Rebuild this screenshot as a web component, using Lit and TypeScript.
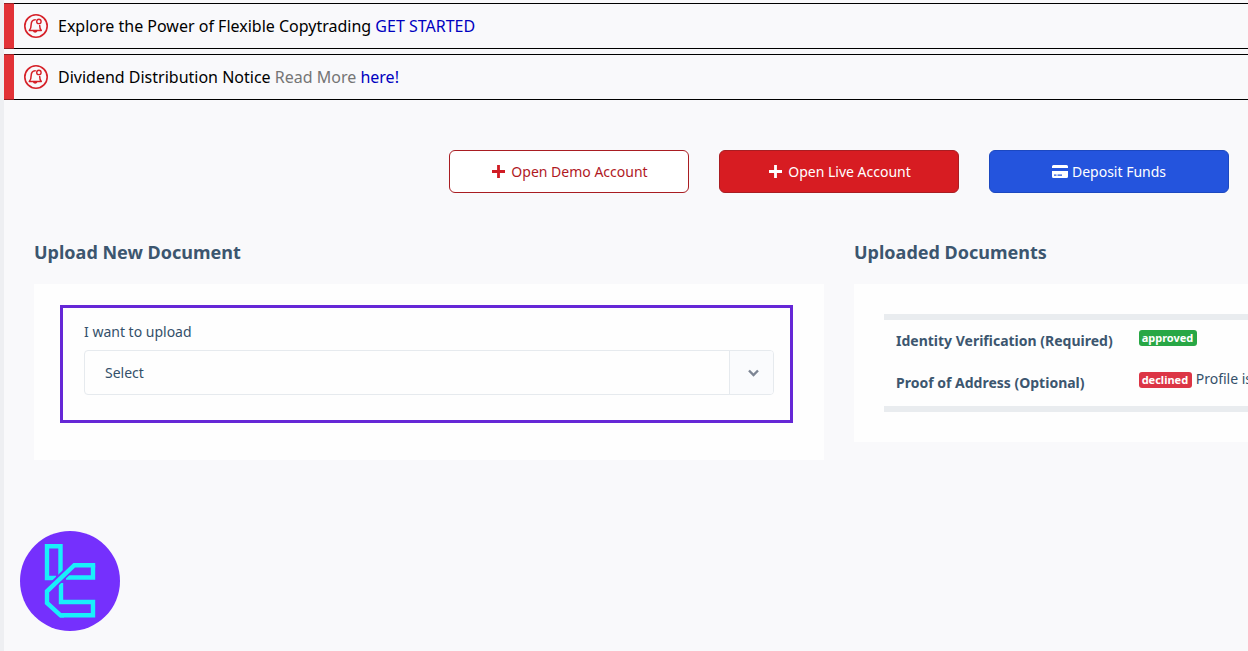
import { LitElement, html, css } from "lit";
import { customElement } from "lit/decorators.js";

const bell = html`<svg class="bell" viewBox="0 0 24 24" fill="none" stroke="#d62028" aria-hidden="true">
  <circle cx="12" cy="12" r="11.2" stroke-width="1.6" />
  <path d="M11.2 5.8C8.4 6 7.300 7.900 7.200 10.200c0 3-.2 4.400-1.900 6.300h12c-1.200-1.300-1.600-2.800-1.600-4.900" stroke-width="1.500" stroke-linecap="round" stroke-linejoin="round" />
  <path d="M9 17c.3 2.200 4 2.200 4.300 0z" fill="#d62028" stroke="none" />
  <circle cx="14.900" cy="7.400" r="2.200" stroke-width="1.400" />
</svg>`;

const plus = html`<svg class="plus" viewBox="0 0 12 12" fill="currentColor" aria-hidden="true">
  <path d="M4.700 0h2.600v4.700H12v2.600H7.300V12H4.700V7.300H0V4.700h4.700z" />
</svg>`;

const card = html`<svg class="card-icon" viewBox="0 0 16 13" fill="currentColor" aria-hidden="true">
  <path d="M1.500 0h13A1.500 1.500 0 0 1 16 1.500V3H0V1.500A1.500 1.500 0 0 1 1.500 0z" />
  <path fill-rule="evenodd" d="M0 6h16v5.500a1.500 1.500 0 0 1-1.500 1.500h-13A1.500 1.500 0 0 1 0 11.500zM2 9.500v1.200h2.500V9.500zM5.500 9.500v1.200H10V9.500z" />
</svg>`;

const documents = [
  { name: "Identity Verification (Required)", status: "approved", note: "" },
  { name: "Proof of Address (Optional)", status: "declined", note: "Profile is not verified" },
];

@customElement("app-root")
export class AppRoot extends LitElement {
  static styles = css`
    :host {
      display: block;
      box-sizing: border-box;
      min-height: 100vh;
      overflow: hidden;
      position: relative;
      padding-top: 3px;
      border-left: 4px solid #eeeff2;
      background: #f9f9fb;
      color: #34506a;
      font: 14px/20px "Noto Sans", sans-serif;
    }
    * { box-sizing: border-box; }
    a { color: #0000c0; text-decoration: none; }
    .notices { display: grid; gap: 5px; }
    .notice {
      display: flex;
      align-items: center;
      gap: 10px;
      height: 46px;
      border: solid #000;
      border-width: 1px 0;
      font-size: 16px;
      line-height: 24px;
      color: #000;
    }
    .notice::before {
      content: "";
      align-self: stretch;
      width: 10px;
      margin: -1px 0;
      border: solid #941f22;
      border-width: 1px 0;
      background: #e23237;
    }
    .notice p { margin: 0; white-space: nowrap; }
    .muted { color: #757575; }
    .bell { width: 24px; height: 24px; flex: none; }
    .actions {
      display: flex;
      justify-content: flex-end;
      gap: 30px;
      margin: 50px 19px 0 30px;
    }
    .action {
      display: flex;
      align-items: center;
      justify-content: center;
      gap: 6px;
      width: 240px;
      height: 43px;
      padding: 0 0 0 2px;
      border: 1px solid #a91d22;
      border-radius: 6px;
      font: inherit;
    }
    .demo { background: #fff; color: #b0191f; }
    .demo .plus { color: #d01c24; }
    .live { background: #d71c22; color: #fff; }
    .deposit { padding: 0; background: #2454dd; border-color: #1c48c0; color: #fff; gap: 4px; }
    .plus { width: 13px; height: 13px; }
    .card-icon { width: 16px; height: 13px; }
    .columns {
      display: grid;
      grid-template-columns: 2fr 1fr;
      gap: 30px;
      align-items: start;
      margin: 47px -1px 0 30px;
    }
    h2 { margin: 0 0 20px; font-size: 18px; line-height: 24px; font-weight: 700; color: #3c566f; }
    section { min-width: 0; }
    .card { background: #fefefe; padding: 21px 31px 37px 26px; }
    .field {
      display: grid;
      gap: 8px;
      padding: 14px 16px 25px 21px;
      border: 3px solid #6527d6;
    }
    .select-wrap { display: grid; grid-template-columns: 1fr 45px; height: 45px; }
    select {
      grid-area: 1 / 1 / 2 / 3;
      appearance: none;
      width: 100%;
      margin: 0;
      padding: 0 60px 0 20px;
      border: 1px solid #e6eaee;
      border-radius: 4px;
      background: #fefefe;
      color: inherit;
      font: inherit;
    }
    .arrow {
      grid-area: 1 / 2;
      display: grid;
      place-items: center;
      margin: 1px 1px 1px 0;
      padding-left: 4px;
      border-left: 1px solid #e6eaee;
      border-radius: 0 3px 3px 0;
      background: #fafbfd;
      pointer-events: none;
      z-index: 1;
    }
    .arrow svg { width: 11px; height: 8px; }
    .list { padding: 30px; overflow: hidden; }
    table {
      padding-bottom: 2px;
      border-collapse: separate;
      border-spacing: 0;
      border: solid #e9ecef;
      border-width: 6px 0;
      white-space: nowrap;
      text-align: left;
    }
    th, td { height: 42px; vertical-align: top; }
    th { padding: 11px 14px 11px 12px; font-weight: 700; color: #3c566f; }
    td { padding: 7px 12px; }
    .badge {
      display: inline-block;
      padding: 0 4px 0 3px;
      border-radius: 3px;
      font-size: 11px;
      line-height: 16px;
      font-weight: 700;
      color: #fff;
    }
    .approved { background: #28a745; }
    .declined { background: #dc3545; }
    .logo {
      position: absolute;
      left: 16px;
      bottom: 20px;
      width: 100px;
      height: 100px;
    }
    .handle {
      position: absolute;
      left: -4px;
      bottom: 19px;
      width: 4px;
      height: 17px;
      padding-top: 8px;
      background: #fff;
    }
    .handle::before {
      content: "";
      display: block;
      width: 1px;
      height: 1px;
      background: #888;
    }
  `;

  render() {
    return html`
      <div class="notices">
        <div class="notice">${bell}<p>Explore the Power of Flexible Copytrading <a href="#start">GET STARTED</a></p></div>
        <div class="notice">${bell}<p>Dividend Distribution Notice <span class="muted">Read More</span> <a href="#notice">here!</a></p></div>
      </div>
      <div class="actions">
        <button class="action demo" type="button">${plus}Open Demo Account</button>
        <button class="action live" type="button">${plus}Open Live Account</button>
        <button class="action deposit" type="button">${card}Deposit Funds</button>
      </div>
      <main class="columns">
        <section>
          <h2>Upload New Document</h2>
          <div class="card">
            <div class="field">
              <label for="kind">I want to upload</label>
              <div class="select-wrap">
                <select id="kind"><option>Select</option></select>
                <span class="arrow" aria-hidden="true">
                  <svg viewBox="0 0 11 8" fill="none" stroke="#7d8594" stroke-width="2.400"><path d="M1 1.500 5.500 6 10 1.500" /></svg>
                </span>
              </div>
            </div>
          </div>
        </section>
        <section>
          <h2>Uploaded Documents</h2>
          <div class="card list">
            <table>
              <tbody>
                ${documents.map((d) => html`<tr>
                  <th scope="row">${d.name}</th>
                  <td><span class="badge ${d.status}">${d.status}</span> ${d.note}</td>
                </tr>`)}
              </tbody>
            </table>
          </div>
        </section>
      </main>
      <svg class="logo" viewBox="0 0 100 100" role="img" aria-label="Logo">
        <circle cx="50" cy="50" r="50" fill="#7530fd" />
        <g fill="none" stroke="#18f0fb" stroke-width="4.400">
          <path d="M36 47H27V15.300H40.500V44" />
          <path d="M46 46.500H73V34.200" />
          <path d="M41 52V71H73V84.300H40" />
          <path d="M27 60 54 34.200" stroke="#7530fd" stroke-width="8" />
          <path d="M75.200 34.200H54.300L27 60.300V72L40.500 84.300H44" />
        </g>
      </svg>
      <span class="handle"></span>
    `;
  }
}
